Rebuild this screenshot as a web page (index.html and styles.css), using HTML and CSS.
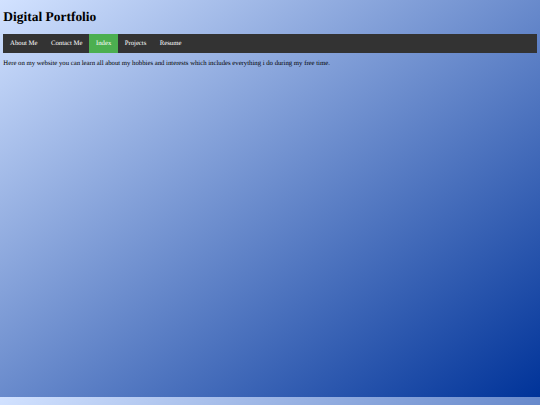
FILE: index.html
```html
<!DOCTYPE html>
<html lang="en">
<head>
<meta charset="utf-8">
<title>Digital Portfolio</title>
<link rel="stylesheet" href="styles.css">
</head>
<body>
<h1 class="title">Digital Portfolio</h1>
<ul class="topnav">
  <li><a href="#">About Me</a></li>
  <li><a href="#">Contact Me</a></li>
  <li><a class="active" href="#">Index</a></li>
  <li><a href="#">Projects</a></li>
  <li><a href="#">Resume</a></li>
</ul>
<p class="intro">Here on my website you can learn all about my hobbies and interests which includes everything i do during my free time.</p>
</body>
</html>
```
FILE: styles.css
```css
html {
  background: linear-gradient(to bottom right, #d2e2ff, #003399);
  background-size: 100% 397px;
  background-repeat: repeat;
}
body {
  margin: 3.36px;
  font-family: "Liberation Serif", "Times New Roman", serif;
  color: #000;
  text-rendering: geometricPrecision;
}
.title {
  font-size: 13.44px;
  font-weight: bold;
  margin: 6px 0 9px;
}
.topnav {
  list-style: none;
  margin: 0;
  padding: 0;
  display: flex;
  background: #333;
}
.topnav a {
  display: block;
  color: #fff;
  text-decoration: none;
  font-size: 6.72px;
  padding: 5.88px 6.72px;
}
.topnav a.active {
  background: #4caf50;
}
.intro {
  font-size: 6.72px;
  margin: 7.2px 0;
}
```
